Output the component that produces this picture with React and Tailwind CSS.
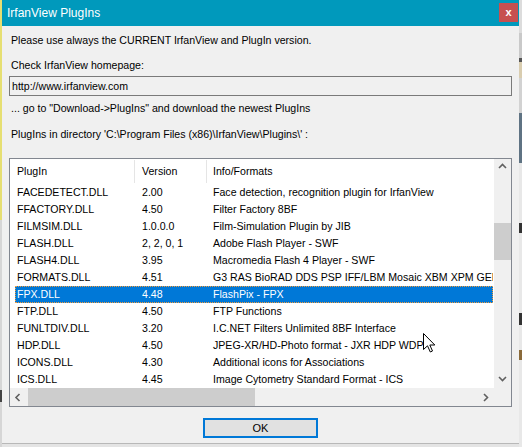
const rows = [
  ['FACEDETECT.DLL', '2.00', 'Face detection, recognition plugin for IrfanView'],
  ['FFACTORY.DLL', '4.50', 'Filter Factory 8BF'],
  ['FILMSIM.DLL', '1.0.0.0', 'Film-Simulation Plugin by JIB'],
  ['FLASH.DLL', '2, 2, 0, 1', 'Adobe Flash Player - SWF'],
  ['FLASH4.DLL', '3.95', 'Macromedia Flash 4 Player - SWF'],
  ['FORMATS.DLL', '4.51', 'G3 RAS BioRAD DDS PSP IFF/LBM Mosaic XBM XPM GEM KOA'],
  ['FPX.DLL', '4.48', 'FlashPix - FPX'],
  ['FTP.DLL', '4.50', 'FTP Functions'],
  ['FUNLTDIV.DLL', '3.20', 'I.C.NET Filters Unlimited 8BF Interface'],
  ['HDP.DLL', '4.50', 'JPEG-XR/HD-Photo format - JXR HDP WDP'],
  ['ICONS.DLL', '4.30', 'Additional icons for Associations'],
  ['ICS.DLL', '4.45', 'Image Cytometry Standard Format - ICS'],
]

// Small scrollbar arrow, drawn as a chevron
function Chevron({ dir }) {
  const pts = {
    up: '1,5 4.5,1.5 8,5',
    down: '1,2 4.5,5.5 8,2',
    left: '5.5,1 2,4.5 5.5,8',
    right: '3,1 6.5,4.5 3,8',
  }[dir]
  return (
    <svg width="9" height="9" viewBox="0 0 9 9">
      <polyline points={pts} fill="none" stroke="#606060" strokeWidth="1.6" />
    </svg>
  )
}

export default function App() {
  return (
    <div className="relative flex h-[447px] w-[522px] overflow-hidden bg-[#e4e4e4] font-['Liberation_Sans',Arial,sans-serif] text-[10.6px] text-black">
      {/* edge of the window behind, left */}
      <div className="flex w-[2px] flex-col">
        <div className="h-[220px] bg-[#e6df72]" />
        <div className="h-[170px] bg-[#d6d6d6]" />
        <div className="h-[12px] bg-[#444]" />
        <div className="flex-1 bg-[#d6d6d6]" />
      </div>

      <div className="flex h-[444px] w-[517px] flex-col border-b border-[#b8b8b8] bg-[#f0f0f0]">
        <div className="flex h-[26px] shrink-0 bg-[#0099bc] pl-[5px] text-white">
          <div className="self-center text-[12px]">IrfanView PlugIns</div>
          <div className="mr-[1px] ml-auto mt-[3px] flex h-[19px] w-[19px] items-center justify-center bg-[#c75050] text-[11px] font-bold leading-none">
            x
          </div>
        </div>

        <div className="flex flex-1 flex-col px-[7px] leading-[13px]">
          <div className="mt-[8px] pl-[2px]">Please use always the CURRENT IrfanView and PlugIn version.</div>
          <div className="mt-[12px] pl-[2px]">Check IrfanView homepage:</div>
          <div className="mt-[4px] flex h-[20px] items-center border border-[#7a7a7a] pl-[2px]">
            http://www.irfanview.com
          </div>
          <div className="mt-[6px] pl-[2px]">... go to "Download-&gt;PlugIns" and download the newest PlugIns</div>
          <div className="mt-[13px] pl-[2px]">PlugIns in directory 'C:\Program Files (x86)\IrfanView\Plugins\' :</div>

          {/* list view */}
          <div className="mt-[17px] flex h-[249px] flex-col border border-[#828790] bg-white">
            <div className="flex">
              <div className="flex w-[484px] flex-col">
                <div className="relative flex h-[25px] items-center">
                  <div className="w-[125px] pl-[7px]">PlugIn</div>
                  <div className="w-[72px] pl-[7px]">Version</div>
                  <div className="pl-[6px]">Info/Formats</div>
                  <div className="absolute left-[124px] top-[1px] h-[23px] w-px bg-[#e5e5e5]" />
                  <div className="absolute left-[196px] top-[1px] h-[23px] w-px bg-[#e5e5e5]" />
                </div>
                {rows.map(([name, ver, info]) => {
                  const sel = name === 'FPX.DLL'
                  return (
                    <div
                      key={name}
                      className={
                        sel
                          ? 'ml-[5px] mr-[1px] flex h-[17px] items-center bg-[#0078d7] text-white outline-1 -outline-offset-1 outline-dotted outline-[#f39c3c]'
                          : 'ml-[5px] mr-[1px] flex h-[17px] items-center'
                      }
                    >
                      <div className="w-[120px] pl-[2px]">{name}</div>
                      <div className="w-[72px] pl-[7px]">{ver}</div>
                      <div className="flex-1 overflow-hidden whitespace-nowrap pl-[6px]">{info}</div>
                    </div>
                  )
                })}
              </div>
              <div className="flex w-[17px] flex-col bg-[#f0f0f0]">
                <div className="flex h-[17px] items-center justify-center">
                  <Chevron dir="up" />
                </div>
                <div className="mt-[47px] h-[37px] bg-[#cdcdcd]" />
                <div className="flex-1" />
                <div className="flex h-[17px] items-center justify-center">
                  <Chevron dir="down" />
                </div>
              </div>
            </div>
            <div className="flex flex-1 bg-[#f0f0f0]">
              <div className="flex w-[484px] items-center">
                <div className="flex h-full w-[17px] items-center justify-center">
                  <Chevron dir="left" />
                </div>
                <div className="ml-[1px] h-full w-[227px] bg-[#cdcdcd]" />
                <div className="flex-1" />
                <div className="flex h-full w-[17px] items-center justify-center">
                  <Chevron dir="right" />
                </div>
              </div>
            </div>
          </div>

          <button
            type="button"
            className="mt-[11px] h-[20px] w-[115px] self-center border-2 border-[#0078d7] bg-[#e1e1e1] text-[11px] leading-none"
          >
            OK
          </button>
        </div>
      </div>

      {/* edge of the window behind, right */}
      <div className="flex w-[3px] flex-col">
        <div className="h-[33px] bg-[#dcdcdc]" />
        <div className="h-[25px] bg-[#c9c9c9]" />
        <div className="h-[4px] bg-[#555]" />
        <div className="h-[16px] bg-[#d9cdb0]" />
        <div className="h-[35px] bg-[#d2d2d2]" />
        <div className="h-[50px] bg-[#5f7383]" />
        <div className="h-[60px] bg-[#e8e8e8]" />
        <div className="h-[10px] bg-[#333]" />
        <div className="h-[80px] bg-[#e8e8e8]" />
        <div className="h-[12px] bg-[#333]" />
        <div className="h-[25px] bg-[#e8e8e8]" />
        <div className="h-[10px] bg-[#8a6a3a]" />
        <div className="flex-1 bg-[#e8e8e8]" />
      </div>

      {/* mouse pointer */}
      <svg className="absolute left-[423px] top-[333px]" width="13" height="20" viewBox="0 0 13 20">
        <path d="M0.5 0.5 L0.5 16.5 L4.5 12.8 L7.3 19 L9.5 18 L6.8 12 L11.8 12 Z" fill="#fff" stroke="#000" strokeWidth="1" />
      </svg>
    </div>
  )
}
